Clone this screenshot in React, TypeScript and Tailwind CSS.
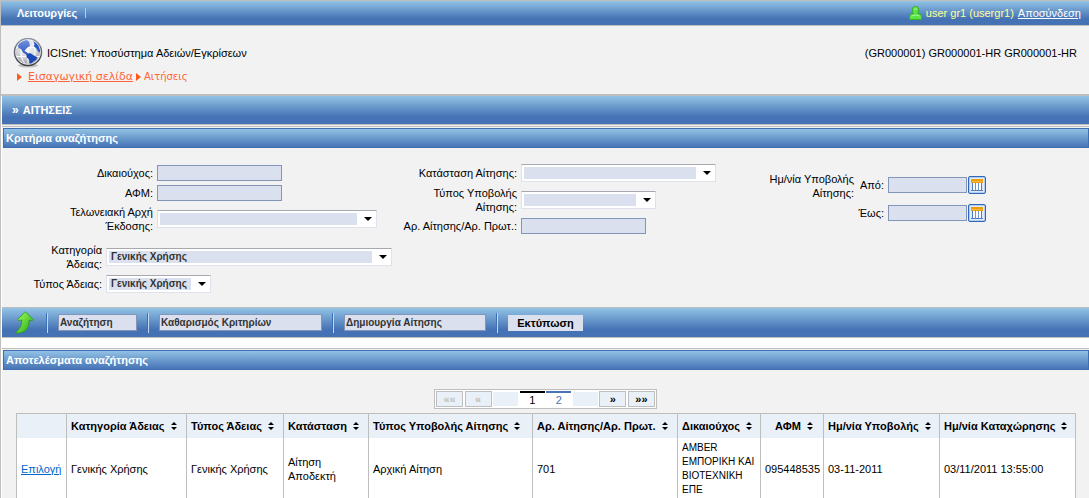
import type { ReactNode } from "react";

const columns = [
  { label: "", width: "w-[50px]" },
  { label: "Κατηγορία Άδειας", width: "w-[120px]" },
  { label: "Τύπος Άδειας", width: "w-[97px]" },
  { label: "Κατάσταση", width: "w-[85px]" },
  { label: "Τύπος Υποβολής Αίτησης", width: "w-[164px]" },
  { label: "Αρ. Αίτησης/Αρ. Πρωτ.", width: "w-[145px]" },
  { label: "Δικαιούχος", width: "w-[83px]" },
  { label: "ΑΦΜ", width: "w-[63px]", center: true },
  { label: "Ημ/νία Υποβολής", width: "w-[116px]" },
  { label: "Ημ/νία Καταχώρησης", width: "w-[136px]" },
];

const rows = [
  {
    category: "Γενικής Χρήσης",
    type: "Γενικής Χρήσης",
    status: "Αίτηση Αποδεκτή",
    kind: "Αρχική Αίτηση",
    number: "701",
    holder: "AMBER ΕΜΠΟΡΙΚΗ ΚΑΙ ΒΙΟΤΕΧΝΙΚΗ ΕΠΕ",
    afm: "095448535",
    submitted: "03-11-2011",
    registered: "03/11/2011 13:55:00",
  },
];

function GlobeIcon() {
  return (
    <svg width="30" height="30" viewBox="0 0 30 30" aria-hidden="true">
      <defs>
        <radialGradient id="globe" cx="0.45" cy="0.3" r="0.75">
          <stop offset="0" stopColor="#ffffff" />
          <stop offset="0.6" stopColor="#d0d1d5" />
          <stop offset="1" stopColor="#94969c" />
        </radialGradient>
        <linearGradient id="rim" x1="0" y1="0" x2="0" y2="1">
          <stop offset="0" stopColor="#8d96a8" />
          <stop offset="1" stopColor="#3c3d42" />
        </linearGradient>
        <linearGradient id="land" x1="0" y1="0" x2="0" y2="1">
          <stop offset="0" stopColor="#7595dc" />
          <stop offset="1" stopColor="#2a56c4" />
        </linearGradient>
        <clipPath id="disc">
          <circle cx="15" cy="14" r="12" />
        </clipPath>
      </defs>
      <ellipse cx="15" cy="27.5" rx="10" ry="2" fill="#c4c4c4" />
      <circle cx="15" cy="14" r="13.5" fill="#f8f8f8" stroke="url(#rim)" strokeWidth="1.5" />
      <circle cx="15" cy="14" r="12" fill="url(#globe)" />
      <g clipPath="url(#disc)">
        <g fill="none" stroke="#ffffff">
          <path d="M2 9.5h26M2 18.5h26M15 1v27" />
          <ellipse cx="15" cy="14" rx="7" ry="13" />
        </g>
        <path
          d="M5 8Q6 2 12 1.500Q16 2 16.500 5L17 8L14.500 9.500L12.500 11.500L11.500 13L14 14.500L16 16L14 17L10 14.500L8 11L5.500 10Z"
          fill="url(#land)"
        />
        <path d="M13.500 16.500L17 15L20 17L24 19L23.500 21.500L20.500 23.500L18 26L16.500 25L16 21.500L13.500 19Z" fill="#1b49ba" />
        <path d="M20 2.500L24 4L28 9L28 15L25 13.500L23.500 10.500L21 8.500L21.500 6Z" fill="#2757c4" />
      </g>
    </svg>
  );
}

function UserIcon() {
  return (
    <svg width="13" height="15" viewBox="0 0 13 15" aria-hidden="true">
      <path
        d="M3.500 3Q3.500 0.500 6.500 0.500Q9.500 0.500 9.500 3L9.500 5Q9.500 6.500 8.500 7.500L10.500 8Q12.500 8.500 12.500 10.500L12.500 13.500L0.500 13.500L0.500 10.500Q0.500 8.500 2.500 8L4.500 7.500Q3.500 6.500 3.500 5Z"
        fill="#5be345"
        stroke="#35b32c"
      />
      <path d="M5 3.500Q6.500 2 8 3.500M2.500 10Q6.500 8 10.500 10" stroke="#a9f69a" fill="none" />
    </svg>
  );
}

function UpArrowIcon() {
  return (
    <svg width="19" height="23" viewBox="0 0 19 23" aria-hidden="true">
      <defs>
        <linearGradient id="up" x1="0" y1="0" x2="1" y2="1">
          <stop offset="0.2" stopColor="#8cf04e" />
          <stop offset="0.9" stopColor="#2fae1c" />
        </linearGradient>
      </defs>
      <path
        d="M10.500 0.700L18 8.500Q18 10 16 9.500L14 9.500Q14.500 20 5 22L0.800 22Q0.800 21 3 19.500Q7 15 7 9L3.500 9.500Q2 9 3 8Z"
        fill="url(#up)"
        stroke="#2a9a1d"
        strokeWidth="0.800"
      />
    </svg>
  );
}

function CalendarIcon() {
  return (
    <svg width="18" height="18" viewBox="0 0 18 18" aria-hidden="true">
      <rect x="0.500" y="0.500" width="17" height="17" rx="1.500" fill="#b5cdf0" stroke="#2f66b8" />
      <rect x="2" y="2" width="14" height="14" fill="#dfeafa" />
      <path d="M4 6h10v8H4Z" fill="#ffffff" />
      <path d="M3 3h12v4H3Z" fill="#ee9f0c" />
      <path d="M4 5.500h10" stroke="#f4b73d" />
      <path d="M4.500 7v7M13.500 7v7M3 14.500h12" stroke="#4d7cc4" />
      <path d="M7.500 7v7M10.500 7v7" stroke="#6f95d0" />
    </svg>
  );
}

function SortIcon() {
  return (
    <svg width="6" height="8" viewBox="0 0 6 8" className="ml-1.5 inline-block align-baseline" aria-hidden="true">
      <path d="M0 3L3 0L6 3ZM0 5L3 8L6 5Z" fill="#000" />
    </svg>
  );
}

function Crumb() {
  return (
    <svg width="5" height="8" viewBox="0 0 5 8" aria-hidden="true">
      <path d="M0 0L5 4L0 8Z" fill="#ff5a1f" />
    </svg>
  );
}

type FieldProps = { id: string; label: string; labelClass: string; className?: string; children: ReactNode };

function Field({ id, label, labelClass, className = "", children }: FieldProps) {
  return (
    <div className={`flex items-center gap-1 ${className}`}>
      <label htmlFor={id} className={`shrink-0 text-right ${labelClass}`}>
        {label}
      </label>
      {children}
    </div>
  );
}

function TextInput({ id, width = "w-[125px]" }: { id: string; width?: string }) {
  return <input id={id} type="text" className={`h-4 border border-[#8495ba] bg-[#dae0ee] px-1 ${width}`} />;
}

function SelectBox({ id, width, value = "" }: { id: string; width: string; value?: string }) {
  return (
    <div className={`flex h-[18px] items-center border border-[#dfe2ea] border-t-[#a8a8b0] bg-white pl-0.5 ${width}`}>
      <select
        id={id}
        className="h-3 min-w-0 flex-1 appearance-none bg-[#dae0ee] pl-0.5 text-[10px] leading-3 font-bold text-[#333]"
      >
        <option>{value}</option>
      </select>
      <svg width="19" height="12" viewBox="0 0 19 12" className="pointer-events-none" aria-hidden="true">
        <path d="M7 4h8l-4 4Z" fill="#000" />
      </svg>
    </div>
  );
}

function PanelTitle({ children }: { children: ReactNode }) {
  return (
    <h2 className="ml-px flex h-5 items-center border border-[#3d6fb3] bg-linear-to-b from-[#92c1e4] to-[#4674b6] px-0.5 text-[11px] font-bold text-white">
      {children}
    </h2>
  );
}

function ToolButton({ children, width }: { children: ReactNode; width: string }) {
  return (
    <div className="flex items-center gap-2.5">
      <button
        type="button"
        className={`h-[17px] border border-[#8495ba] bg-[#dae0ee] px-px text-left text-[10px] font-bold whitespace-nowrap text-[#333] ${width}`}
      >
        {children}
      </button>
      <Divider />
    </div>
  );
}

function Divider() {
  return <span className="h-5 w-0.5 border-r border-l border-r-[#c3d8f0] border-l-[#3d6fb3]" />;
}

const barClass = "bg-linear-to-b from-[#93c3e5] to-[#4572b4] to-75%";
const pagerClass = "h-4 w-[27px] border border-[#bebebe] bg-[#eaf0f8] leading-3 font-bold disabled:text-[#bebebe]";
const cellClass = "border-x border-[#bebebe] py-[3px] pl-1";

export default function App() {
  return (
    <div className="min-h-screen border-t border-l border-[#bebebe] bg-[#f2f2f2] font-['Liberation_Sans',Arial,sans-serif] text-[11px] leading-[14px] text-black">
      <nav className={`flex h-[25px] items-center border-b border-[#bebebe] pr-2 pl-4 ${barClass}`}>
        <a href="#menu" className="font-bold text-white">
          Λειτουργίες
        </a>
        <span className="ml-2 h-2.5 w-px bg-[#b9cdea]" />
        <div className="ml-auto flex items-center gap-1 text-[#ffff99]">
          <UserIcon />
          <span>user gr1 (usergr1)</span>
          <a href="#logout" className="text-white underline">
            Αποσύνδεση
          </a>
        </div>
      </nav>

      <header className="h-[70px] border-b-2 border-[#bebebe] pt-3 pr-3 pl-3">
        <div className="flex items-center gap-1">
          <GlobeIcon />
          <h1>ICISnet: Υποσύστημα Αδειών/Εγκρίσεων</h1>
          <span className="ml-auto">(GR000001) GR000001-HR GR000001-HR</span>
        </div>
        <div className="mt-0.5 flex items-center gap-[3px] pl-1 font-['DejaVu_Sans',sans-serif] text-[#ff6437]">
          <Crumb />
          <a href="#home" className="ml-[3px] text-[11px] underline">
            Εισαγωγική σελίδα
          </a>
          <Crumb />
          <span className="text-[10px]">Αιτήσεις</span>
        </div>
      </header>

      <main className="border-l border-white">
        <div className={`flex h-[29px] items-center gap-1 border-b border-[#bebebe] px-2.5 font-bold text-white ${barClass}`}>
          <span className="text-xs">»</span>
          <span>ΑΙΤΗΣΕΙΣ</span>
        </div>

        <form className="mt-px border-t border-[#bebebe] pt-px">
          <PanelTitle>Κριτήρια αναζήτησης</PanelTitle>
          <div className="grid grid-cols-[395fr_343fr_349fr] pt-4">
            <div className="flex flex-col gap-1 pt-px">
              <Field id="holder" label="Δικαιούχος:" labelClass="w-[151px]" className="h-4">
                <TextInput id="holder" />
              </Field>
              <Field id="afm" label="ΑΦΜ:" labelClass="w-[151px]" className="h-4">
                <TextInput id="afm" />
              </Field>
              <Field id="office" label="Τελωνειακή Αρχή Έκδοσης:" labelClass="w-[151px] pl-12">
                <SelectBox id="office" width="w-[220px]" />
              </Field>
            </div>
            <div className="flex flex-col gap-1">
              <Field id="status" label="Κατάσταση Αίτησης:" labelClass="w-[120px]" className="h-[18px]">
                <SelectBox id="status" width="w-[195px]" />
              </Field>
              <Field id="kind" label="Τύπος Υποβολής Αίτησης:" labelClass="w-[120px] pl-6">
                <SelectBox id="kind" width="w-[135px]" />
              </Field>
              <Field id="number" label="Αρ. Αίτησης/Αρ. Πρωτ.:" labelClass="w-[120px]" className="h-4">
                <TextInput id="number" />
              </Field>
            </div>
            <fieldset className="flex gap-1 pt-2">
              <legend className="float-left w-[114px] pl-6 text-right">Ημ/νία Υποβολής Αίτησης:</legend>
              <div className="flex flex-col gap-2.5 pt-1">
                <div className="flex items-center gap-px">
                  <Field id="from" label="Από:" labelClass="w-[26px]">
                    <TextInput id="from" width="w-[79px]" />
                  </Field>
                  <button type="button" aria-label="Από">
                    <CalendarIcon />
                  </button>
                </div>
                <div className="flex items-center gap-px">
                  <Field id="until" label="Έως:" labelClass="w-[26px]">
                    <TextInput id="until" width="w-[79px]" />
                  </Field>
                  <button type="button" aria-label="Έως">
                    <CalendarIcon />
                  </button>
                </div>
              </div>
            </fieldset>
          </div>
          <div className="flex flex-col gap-1 pt-[9px] pb-3.5">
            <Field id="category" label="Κατηγορία Άδειας:" labelClass="w-[100px] pl-10">
              <SelectBox id="category" width="w-[286px]" value="Γενικής Χρήσης" />
            </Field>
            <Field id="type" label="Τύπος Άδειας:" labelClass="w-[100px]">
              <SelectBox id="type" width="w-[105px]" value="Γενικής Χρήσης" />
            </Field>
          </div>

          <div className={`flex h-[31px] items-center gap-2.5 border-t border-b border-[#bebebe] pl-[13px] ${barClass}`}>
            <button type="button" aria-label="Επιστροφή" className="mr-0.5">
              <UpArrowIcon />
            </button>
            <Divider />
            <ToolButton width="w-[79px]">Αναζήτηση</ToolButton>
            <ToolButton width="w-[163px]">Καθαρισμός Κριτηρίων</ToolButton>
            <ToolButton width="w-[142px]">Δημιουργία Αίτησης</ToolButton>
            <button type="button" className="h-4 w-[75px] bg-[#dae0ee] font-bold">
              Εκτύπωση
            </button>
          </div>
        </form>

        <div className="h-2.5 bg-white" />

        <section className="border-t border-[#bebebe] pt-px">
          <PanelTitle>Αποτελέσματα αναζήτησης</PanelTitle>
          <div className="px-[14px] pt-[19px]">
            <nav aria-label="Σελίδες" className="mx-auto flex h-5 w-[223px] items-center justify-between border border-[#bebebe] bg-white px-px">
              <button type="button" disabled className={pagerClass}>
                ««
              </button>
              <button type="button" disabled className={pagerClass}>
                «
              </button>
              <span className="h-[14px] w-[25px] bg-[#eaf0f8]" />
              <button type="button" aria-current="page" className="h-4 w-[25px] border-t-2 border-black">
                1
              </button>
              <button type="button" className="h-4 w-[25px] border-t-2 border-[#4674b6] text-[#4674b6]">
                2
              </button>
              <span className="h-[14px] w-[25px] bg-[#eaf0f8]" />
              <button type="button" className={pagerClass}>
                »
              </button>
              <button type="button" className={pagerClass}>
                »»
              </button>
            </nav>

            <table className="mt-1 w-full table-fixed border-collapse bg-white">
              <thead className="bg-[#eaf0f8]">
                <tr className="h-6">
                  {columns.map((col) => (
                    <th
                      key={col.label}
                      className={`border-x border-t border-[#bebebe] pl-1 whitespace-nowrap ${col.width} ${
                        col.center ? "text-center" : "text-left"
                      }`}
                    >
                      {col.label}
                      {col.label && <SortIcon />}
                    </th>
                  ))}
                </tr>
              </thead>
              <tbody>
                {rows.map((row) => (
                  <tr key={row.number}>
                    <td className={cellClass}>
                      <a href="#select" className="text-[#0066cc] underline">
                        Επιλογή
                      </a>
                    </td>
                    <td className={cellClass}>{row.category}</td>
                    <td className={cellClass}>{row.type}</td>
                    <td className={cellClass}>{row.status}</td>
                    <td className={cellClass}>{row.kind}</td>
                    <td className={cellClass}>{row.number}</td>
                    <td className={`text-[10px] ${cellClass}`}>{row.holder}</td>
                    <td className={cellClass}>{row.afm}</td>
                    <td className={cellClass}>{row.submitted}</td>
                    <td className={cellClass}>{row.registered}</td>
                  </tr>
                ))}
              </tbody>
            </table>
          </div>
        </section>
      </main>
    </div>
  );
}
